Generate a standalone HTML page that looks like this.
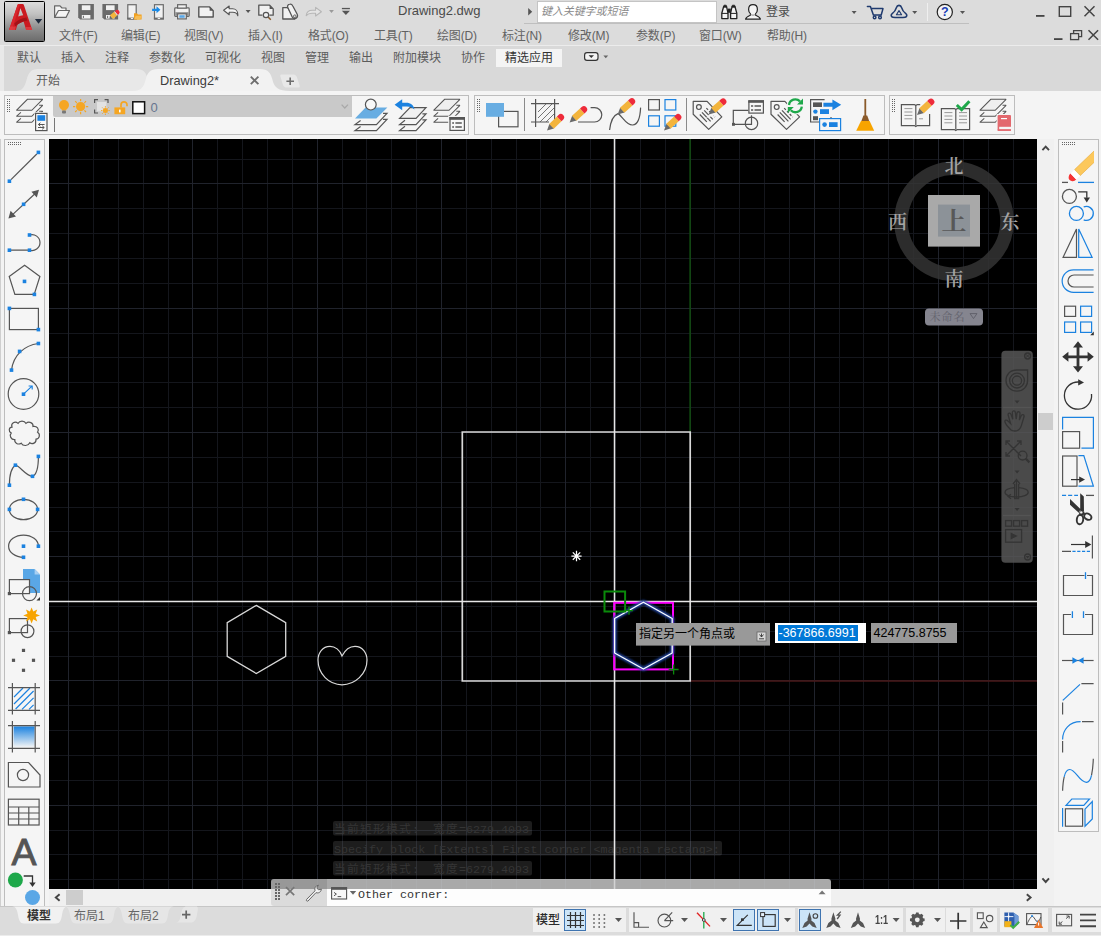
<!DOCTYPE html>
<html lang="zh-CN">
<head>
<meta charset="utf-8">
<title>Drawing2.dwg</title>
<style>
html,body{margin:0;padding:0;}
body{width:1101px;height:936px;overflow:hidden;position:relative;background:#dcdcdc;font-family:"Liberation Sans","Noto Sans CJK SC",sans-serif;font-size:12px;color:#555;}
.abs{position:absolute;}
svg{position:absolute;overflow:visible;}
.t{position:absolute;white-space:nowrap;line-height:16px;}
#titlebar{left:0;top:0;width:1101px;height:24px;background:#dcdcdc;}
#menubar{left:0;top:24px;width:1101px;height:21px;background:#dcdcdc;}
#menubar .t{top:4px;font-size:12px;color:#626262;letter-spacing:-.15px;}
#ribbon{left:0;top:45px;width:1101px;height:46px;background:#d9d9d9;border-top:1px solid #ececec;box-sizing:border-box;}
#ribbon .rt{top:4px;font-size:12px;color:#5c5c5c;}
#toolrow{left:0;top:91px;width:1101px;height:48px;background:#f4f4f4;}
.panel{position:absolute;box-sizing:border-box;border:1px solid #bdbdbd;background:#f5f5f5;}
#canvas{left:49px;top:139px;width:988px;height:750px;background:#000;overflow:hidden;}
#leftbar{left:0;top:139px;width:49px;height:767px;background:#f3f3f3;}
#rightbar{left:1037px;top:139px;width:64px;height:767px;background:#f0f0f0;}
#hscroll{left:49px;top:889px;width:988px;height:17px;background:#f0f0f0;}
#bottom{left:0;top:906px;width:1101px;height:30px;background:#dcdcdc;}
.sg{position:absolute;top:2px;height:24px;background:#f0f0f0;}
.on{position:absolute;top:1px;width:22px;height:22px;box-sizing:border-box;background:#cce4f7;border:1px solid #3f74b0;}
</style>
</head>
<body>
<div id="titlebar" class="abs">
  <div class="abs" style="left:524px;top:23px;width:445px;height:1px;background:#bfbfbf;"></div>
  <div class="t" style="left:398px;top:3px;font-size:13px;color:#4a4a4a;">Drawing2.dwg</div>
  <div class="abs" style="left:537px;top:1px;width:180px;height:22px;box-sizing:border-box;background:#fff;border:1px solid #c4c4c4;"></div>
  <div class="t" style="left:541px;top:3px;font-size:11px;font-style:italic;color:#8a8a8a;letter-spacing:-0.1px;">键入关键字或短语</div>
  <div class="t" style="left:766px;top:4px;font-size:12px;color:#4a4a4a;">登录</div>
  <svg style="left:0;top:0" width="1101" height="24" viewBox="0 0 1101 24">
    <!-- open -->
    <g fill="#f4f4f4" stroke="#666" stroke-width="1.200" stroke-linejoin="round">
      <path d="M54.600 17.400V5.800h5.400l2 2.200h4v2.400"/>
      <path d="M54.600 17.400l3.900-6.900h11l-3.500 6.900z"/>
    </g>
    <!-- save -->
    <g id="floppy">
      <path d="M78.200 4.100h15.700v15.400H80.200l-2-2z" fill="#6a6a6a"/>
      <rect x="81.800" y="5.300" width="8.600" height="4.800" fill="#f1f1f1"/>
      <rect x="81.800" y="15" width="8.600" height="3.600" fill="#f1f1f1"/>
      <rect x="82.900" y="15.800" width="1" height="2.200" fill="#6a6a6a"/>
    </g>
    <!-- save as -->
    <use href="#floppy" x="24.200"/>
    <g transform="translate(109.500 18.800) rotate(-40)">
      <path d="M0 0l2.600-2.400v4.800z" fill="#666"/>
      <rect x="2.600" y="-2.400" width="5.400" height="4.800" fill="#f3b43c"/>
      <rect x="8" y="-2.400" width="1" height="4.800" fill="#fff"/>
      <path d="M9-2.400h1a2.400 2.400 0 0 1 0 4.800H9z" fill="#ee2b3a"/>
    </g>
    <!-- open from mobile -->
    <rect x="127.800" y="4.700" width="8.400" height="14.200" fill="#f1f1f1" stroke="#6a6a6a" stroke-width="1.200"/>
    <rect x="127.200" y="17.600" width="9.600" height="1.900" fill="#6a6a6a"/>
    <rect x="130.800" y="18" width="2.400" height="1" fill="#eee"/>
    <path d="M134 19.500v-6.300h3l1 1.200h3.600v5.100z" fill="#f0a020"/>
    <path d="M134 19.500l1.800-3.800h6.200l-1.800 3.800z" fill="#f7bd55"/>
    <!-- save to mobile -->
    <rect x="154.500" y="4.700" width="8.800" height="14.200" fill="#f1f1f1" stroke="#6a6a6a" stroke-width="1.200"/>
    <rect x="153.900" y="17.600" width="10" height="1.900" fill="#6a6a6a"/>
    <rect x="157.700" y="18" width="2.400" height="1" fill="#eee"/>
    <path d="M152.100 8.700h4.400v-2.400l3.900 3.500-3.900 3.500v-2.400h-4.400z" fill="#1b8ae6"/>
    <!-- print -->
    <rect x="174.700" y="7.900" width="14.500" height="8.400" rx=".8" fill="#f1f1f1" stroke="#666" stroke-width="1.200"/>
    <rect x="175.300" y="12.200" width="13.300" height="3.600" fill="#8c8c8c"/>
    <rect x="177.600" y="4.700" width="8.700" height="3.400" fill="#f1f1f1" stroke="#666" stroke-width="1.200"/>
    <rect x="177.600" y="13.800" width="8.700" height="5.100" fill="#f1f1f1" stroke="#666" stroke-width="1.200"/>
    <rect x="179.300" y="15.200" width="5.400" height="2.600" fill="#5aa7e6"/>
    <!-- page -->
    <path d="M198.800 17V6.900h10.800l3.600 3.800V17z" fill="#f1f1f1" stroke="#555" stroke-width="1.400" stroke-linejoin="round"/>
    <path d="M209.600 6.900v3.800h3.600z" fill="#555"/>
    <!-- undo -->
    <path d="M223.600 10.300l5.600-4.300v2.800h3.400c3 0 5.200 2.200 5.200 5.400v1.600c-.6-2.400-2.400-3.600-5-3.600h-3.600v2.600z" fill="#f4f4f4" stroke="#555" stroke-width="1.100" stroke-linejoin="round"/>
    <path d="M245.600 10h5l-2.500 3z" fill="#555"/>
    <!-- print preview -->
    <path d="M262.400 15.200h-3.600V5.100h10.800l3.600 3.800v6.300h-3.800" fill="#f1f1f1" stroke="#555" stroke-width="1.300" stroke-linejoin="round"/>
    <path d="M269.600 5.100v3.800h3.600z" fill="#555"/>
    <path d="M268 17l2.800 2.800" stroke="#8a5a2a" stroke-width="1.500"/>
    <circle cx="266" cy="15" r="2.700" fill="#f1f1f1" stroke="#555" stroke-width="1.200"/>
    <!-- plot -->
    <path d="M282.800 19V7.600h5l7 11.400z" fill="#f1f1f1" stroke="#555" stroke-width="1.300" stroke-linejoin="round"/>
    <path d="M287.800 7.600c-.8-1.800.2-3.200 2-3.400 1.400-.2 2.400.6 3 1.800l4.400 8.200c1 2-.2 4.400-2.400 4.400-1.400 0-2.200-.8-2.800-2z" fill="#f1f1f1" stroke="#555" stroke-width="1.300" stroke-linejoin="round"/>
    <circle cx="294.800" cy="16.200" r="1.300" fill="none" stroke="#555" stroke-width=".9"/>
    <!-- redo (disabled) -->
    <path d="M321.400 11.800l-5.800-4.400v2.800h-3.400c-3 0-5.600 1.800-6 5.400 1.400-1.800 3.400-2.400 5.800-2.400h3.600v2.800z" fill="#e4e4e4" stroke="#b6b6b6" stroke-width="1.100" stroke-linejoin="round"/>
    <path d="M329.100 10h4.800l-2.400 2.900z" fill="#9a9a9a"/>
    <!-- customize -->
    <rect x="341.900" y="7.900" width="8" height="1.300" fill="#555"/>
    <path d="M341.900 10.800h8l-4 4.300z" fill="#555"/>
    <!-- search arrow -->
    <path d="M528.200 8l4 3.800-4 3.800z" fill="#555"/>
    <!-- binoculars -->
    <g fill="#f4f4f4" stroke="#222" stroke-width="1.300" stroke-linejoin="round">
      <path d="M721.800 18.600v-5.400l1.800-6.400h3l1.400 6.400v5.400z"/>
      <path d="M730.600 18.600v-5.400l1.400-6.400h3l1.800 6.400v5.400z"/>
    </g>
    <path d="M721.800 13.400h6.200M730.600 13.400h6.200" stroke="#222" stroke-width="1"/>
    <rect x="727.800" y="8.600" width="3" height="4.200" fill="#222"/>
    <path d="M723.400 7l.6-1.800h2.200l.6 1.800zM731.800 7l.6-1.800h2.200l.6 1.800z" fill="#222" stroke="#222" stroke-width=".8"/>
    <!-- user -->
    <path d="M745.600 19.200c.4-2.400 2.400-3 4.800-4v-1.600c-1.200-1-1.800-2.400-1.800-4.200 0-2.800 1.600-4.800 4.400-4.800s4.400 2 4.400 4.800c0 1.800-.6 3.200-1.800 4.200v1.600c2.400 1 4.400 1.600 4.800 4z" fill="#f4f4f4" stroke="#222" stroke-width="1.200" stroke-linejoin="round"/>
    <path d="M750.600 14.400c1.600 1 3.200 1 4.800 0" fill="none" stroke="#888" stroke-width="1"/>
    <path d="M851.600 11h5l-2.500 3z" fill="#555"/>
    <!-- cart -->
    <g fill="none" stroke="#1f3a6e" stroke-width="1.500" stroke-linejoin="round" stroke-linecap="round">
      <path d="M867.400 6.400h3l3 8.600h7.800l1.800-6.400h-11"/>
      <circle cx="874.600" cy="17.400" r="1.300"/>
      <circle cx="880" cy="17.400" r="1.300"/>
    </g>
    <!-- a360 -->
    <g fill="none" stroke="#1f3a6e" stroke-width="1.600" stroke-linejoin="round">
      <path d="M899 5.400c1.400 0 2.200.8 2.600 2.200.8 2.800 2.200 4.600 4.200 6 1.400 1 1.400 3.200-.6 3.600-2.200.4-10.200.4-12.400 0-2-.4-2-2.600-.6-3.600 2-1.400 3.400-3.200 4.200-6 .4-1.400 1.200-2.200 2.600-2.200z"/>
      <path d="M899 10.600l2.600 4.200h-5.200z" stroke-width="1.100"/>
    </g>
    <path d="M912.200 11h5l-2.500 3z" fill="#555"/>
    <rect x="927" y="3" width="1" height="18" fill="#efefef"/>
    <!-- help -->
    <circle cx="944.800" cy="12" r="7.600" fill="#f4f4f4" stroke="#222" stroke-width="1.200"/>
    <text x="944.800" y="16.400" text-anchor="middle" font-family="Liberation Sans, sans-serif" font-weight="bold" font-size="12.500" fill="#1a3fb5">?</text>
    <path d="M960 11h5l-2.500 3z" fill="#555"/>
    <!-- window controls -->
    <rect x="1036" y="15" width="8.500" height="1.800" fill="#444"/>
    <rect x="1059.300" y="6.700" width="11.400" height="9.600" fill="none" stroke="#444" stroke-width="1.400"/>
    <path d="M1084.500 6.200l10 10m0-10l-10 10" stroke="#444" stroke-width="1.500"/>
  </svg>
</div>
<div class="abs" id="appbtn" style="left:4px;top:1px;width:41px;height:41px;box-sizing:border-box;border:1px solid #000;border-radius:1.500px;background:linear-gradient(#dcdcdc,#c2c2c2 30%,#8a8a8a 70%,#6c6c6c);z-index:5;">
  <svg style="left:0;top:0" width="39" height="39" viewBox="5 2 39 39">
    <path d="M9 30L17.600 4.800Q17.900 4.100 18.800 4.100H22.600Q23.500 4.100 23.800 4.800L32.200 30H26.200L23.600 21.400Q20.500 22.400 17.500 24.600L15.800 30ZM20.400 8.200L18.200 16.600Q20.600 15.600 23.200 15.200Z" fill="#cb1a21" fill-rule="evenodd"/>
    <path d="M9 30L17.600 4.800Q17.900 4.100 18.800 4.100H20L12 30Z" fill="#d9262d"/>
    <path d="M14.200 23.800Q19 18.600 26.400 17.600L27.400 20.600Q20.500 21.600 15.600 26.200Z" fill="#a31218"/>
    <path d="M9 30l1.200-3.400h5.600L15 30zM26.200 30l-.9-3h5.900l1 3z" fill="#e2464b" opacity=".7"/>
    <path d="M34.900 19.100h7.300l-3.650 4.600z" fill="#1e2a3c"/>
  </svg>
</div>

<div id="menubar" class="abs">
  <div class="t" style="left:59px;">文件(F)</div>
  <div class="t" style="left:121px;">编辑(E)</div>
  <div class="t" style="left:184px;">视图(V)</div>
  <div class="t" style="left:248px;">插入(I)</div>
  <div class="t" style="left:308px;">格式(O)</div>
  <div class="t" style="left:374px;">工具(T)</div>
  <div class="t" style="left:437px;">绘图(D)</div>
  <div class="t" style="left:502px;">标注(N)</div>
  <div class="t" style="left:568px;">修改(M)</div>
  <div class="t" style="left:636px;">参数(P)</div>
  <div class="t" style="left:699px;">窗口(W)</div>
  <div class="t" style="left:767px;">帮助(H)</div>
  <svg style="left:0;top:0" width="1101" height="21" viewBox="0 24 1101 21">
    <rect x="1054" y="38.200" width="8.500" height="1.800" fill="#444"/>
    <rect x="1070.600" y="33.600" width="8" height="6" fill="none" stroke="#444" stroke-width="1.300"/>
    <path d="M1073.600 33.600v-3h8v6h-3" fill="none" stroke="#444" stroke-width="1.300"/>
    <path d="M1088.500 30.200l9.600 9.600m0-9.600l-9.600 9.600" stroke="#444" stroke-width="1.500"/>
  </svg>
</div>

<div id="ribbon" class="abs">
  <div class="abs" style="left:0;top:0;width:4px;height:47px;background:#e9e9e9;"></div>
  <div class="abs" style="left:496px;top:3px;width:66px;height:18px;background:#f4f4f4;"></div>
  <div class="t rt" style="left:17px;">默认</div>
  <div class="t rt" style="left:61px;">插入</div>
  <div class="t rt" style="left:105px;">注释</div>
  <div class="t rt" style="left:149px;">参数化</div>
  <div class="t rt" style="left:205px;">可视化</div>
  <div class="t rt" style="left:261px;">视图</div>
  <div class="t rt" style="left:305px;">管理</div>
  <div class="t rt" style="left:349px;">输出</div>
  <div class="t rt" style="left:393px;">附加模块</div>
  <div class="t rt" style="left:461px;">协作</div>
  <div class="t rt" style="left:505px;color:#333;">精选应用</div>
  <svg style="left:0;top:-1px" width="1101" height="46" viewBox="0 45 1101 46">
    <rect x="584.600" y="52.600" width="13.400" height="7.800" rx="2.400" fill="#f4f4f4" stroke="#333" stroke-width="1.200"/>
    <path d="M588.600 55.200h5.400l-2.700 2.800z" fill="#333"/>
    <path d="M603.400 55.400h4.800l-2.400 2.800z" fill="#666"/>
    <!-- doc tabs -->
    <path d="M16 91c6 0 8.500-3.500 10.500-11S31 69 38 69h98c8 0 10 3.500 12 11S152 91 160 91z" fill="#e8e8e8"/>
    <path d="M281.400 74.400h11.600c2.600 0 3.600 1.400 4.400 4l2.200 7c.5 1.600 0 2.200-1.600 2.200h-10.600c-3 0-4.200-1.400-5-4.400l-2-6.600c-.4-1.400 0-2.200 1-2.200z" fill="#e8e8e8"/>
    <path d="M133 91c8 0 10.500-3.500 12.500-11S150 69 158 69h102c8 0 10.500 3.500 12.500 11S278 91 290 91z" fill="#f2f2f2"/>
    <path d="M286.400 81.200h7.600m-3.800-3.800v7.600" stroke="#6e6e6e" stroke-width="1.600"/>
    <path d="M250.800 76.600l7.600 7.600m0-7.600l-7.600 7.600" stroke="#6e6e6e" stroke-width="1.900"/>
  </svg>
  <div class="t" style="left:36px;top:27px;font-size:12px;color:#5c5c5c;">开始</div>
  <div class="t" style="left:160px;top:27px;font-size:12.800px;color:#3c3c3c;">Drawing2*</div>
</div>

<div id="toolrow" class="abs">
  <div class="panel" style="left:4px;top:4px;width:465px;height:40px;"></div>
  <div class="panel" style="left:474px;top:4px;width:411px;height:40px;"></div>
  <div class="panel" style="left:889px;top:4px;width:126px;height:40px;"></div>
  <div class="abs" style="left:53px;top:5px;width:299px;height:21px;background:#c9c9c9;border-radius:0 0 0 2px;"></div>
  <div class="t" style="left:150.500px;top:8.500px;font-size:13px;color:#66758f;">0</div>
  <svg style="left:0;top:0" width="1101" height="48" viewBox="0 91 1101 48">
    <defs>
      <g id="pencil"><path d="M0 0L6.600-3.300v6.600z" fill="#6a6a6a"/><path d="M6.200-3.100L6.600-3.300h10.400v6.600H6.600L6.200 3.100z" fill="#f3b43c"/><path d="M17-3.300h2.200a3.300 3.300 0 0 1 0 6.600H17z" fill="#ee2b3a"/></g>
      <g id="grip"><path d="M0 0h1v1H0zM2 0h1v1H2zM0 2h1v1H0zM2 2h1v1H2zM0 4h1v1H0zM2 4h1v1H2zM0 6h1v1H0zM2 6h1v1H2zM0 8h1v1H0zM2 8h1v1H2zM0 10h1v1H0zM2 10h1v1H2zM0 12h1v1H0zM2 12h1v1H2z" fill="#666"/></g>
      <g id="lay3" fill="none" stroke="#555" stroke-width="1.050" stroke-linejoin="miter" stroke-miterlimit="2">
        <path d="M11-.1h15.300L15.400 10.900H0z" fill="#efefef"/>
        <path d="M4.500 13L0 16.900h15.400L26.300 5.900h-3.600"/>
        <path d="M4.500 19L0 22.900h15.400L26.300 11.900h-3.600"/>
      </g>
    </defs>
    <use href="#grip" x="7" y="99"/>
    <use href="#grip" x="477" y="99"/>
    <use href="#grip" x="892" y="99"/>
    <!-- layer properties -->
    <use href="#lay3" x="16.400" y="99.400"/>
    <rect x="34.400" y="112.200" width="13.800" height="19.600" fill="#f8f8f8"/><rect x="35.600" y="113.400" width="11.400" height="17.200" fill="#f8f8f8" stroke="#555" stroke-width="1.200"/>
    <rect x="37.400" y="115.200" width="7.800" height="5.600" fill="#1b82e0"/>
    <path d="M44.600 124.500h-6.200m2-1.800l-2 1.800 2 1.800M38 127.500h6.200m-2-1.800l2 1.800-2 1.800" fill="none" stroke="#555" stroke-width="1"/>
    <rect x="54" y="118" width="1" height="14" fill="#777"/>
    <!-- bulb -->
    <circle cx="64" cy="105" r="5" fill="#f5a623"/>
    <path d="M61 108h6l-1 2.500h-4z" fill="#f5a623"/>
    <rect x="62" y="110.600" width="4" height="3" rx="1" fill="#777"/>
    <!-- sun -->
    <circle cx="80.600" cy="106.600" r="4.600" fill="#f5a623"/>
    <path d="M80.600 99v2.200m0 10.800v2.200M73 106.600h2.200m10.800 0h2.200M75.200 101.200l1.600 1.600m7.600 7.600l1.600 1.600M86 101.200l-1.600 1.600m-7.600 7.600l-1.600 1.600" stroke="#f5a623" stroke-width="1.200"/>
    <!-- vp freeze -->
    <rect x="97" y="102" width="9.400" height="9.400" fill="#e2e2e2"/>
    <path d="M94.600 103v-3.400h3.400M104.600 99.600h3.400v3.400M94.600 109.600v3.400h3.400" fill="none" stroke="#555" stroke-width="1.200"/>
    <circle cx="105.400" cy="110.600" r="2.500" fill="#f5a623"/>
    <path d="M105.400 106.200v1.400m0 6v1.400M101 110.600h1.400m6 0h1.400M102.300 107.500l1 1m4.200 4.200l1 1M108.500 107.500l-1 1m-4.200 4.200l-1 1" stroke="#f5a623" stroke-width="1"/>
    <!-- lock -->
    <rect x="114.400" y="107.400" width="10.800" height="6.800" fill="#f5a623"/>
    <path d="M121 107.400v-2.600a3 3 0 0 1 6 0v1.400" fill="none" stroke="#f5a623" stroke-width="1.700"/>
    <rect x="119" y="109.600" width="1.600" height="2.800" fill="#fff"/>
    <!-- colour swatch -->
    <rect x="132.800" y="101.800" width="11.800" height="11.800" fill="#fff" stroke="#111" stroke-width="1.500"/>
    <path d="M341.600 104.600l3.200 3.400 3.200-3.400" fill="none" stroke="#a8a8a8" stroke-width="1.200"/>
    <!-- make layer current -->
    <g fill="none" stroke="#555" stroke-width="1.200">
      <path d="M360.600 120.400L355 124.600h21.400L387 113.400h-4"/>
      <path d="M360.600 126.400L355 130.600h21.400L387 119.400h-4"/>
    </g>
    <path d="M365.600 107.400h21.800l-11 11.200H355z" fill="#68ade2"/>
    <circle cx="370.800" cy="104.600" r="5.400" fill="#f8f8f8" stroke="#555" stroke-width="1.200"/>
    <!-- layer previous -->
    <g fill="#f1f1f1" stroke="#555" stroke-width="1.200">
      <path d="M410 107.600h16l-10 10.800h-16.400z"/>
      <path d="M405 120.200l-5.400 4.400H416l10-10.800h-3.600" fill="none"/>
      <path d="M405 126.200l-5.400 4.400H416l10-10.800h-3.600" fill="none"/>
    </g>
    <path d="M394.600 104.800l7.600-5.600v3.600h4c4.400 0 7.800 2.400 8.200 6.800-1.800-2.400-4.200-3.200-7.600-3.200h-4.600v3.800z" fill="#1b82e0"/>
    <!-- layer states -->
    <use href="#lay3" x="433.600" y="99.400"/>
    <rect x="448.200" y="115.800" width="18" height="16.400" fill="#f5f5f5"/>
    <rect x="450" y="117.600" width="14.400" height="12.800" fill="#f8f8f8" stroke="#555" stroke-width="1.200"/>
    <rect x="449.400" y="117" width="15.600" height="2.800" fill="#555"/>
    <path d="M452.200 123h1.800M455.400 123h6.400M452.200 127h1.800M455.400 127h6.400" stroke="#555" stroke-width="1.400"/>
    <!-- draworder -->
    <rect x="498.600" y="111.400" width="19.400" height="15.400" fill="none" stroke="#555" stroke-width="1.200"/>
    <rect x="486" y="103" width="18" height="13.800" fill="#68ade2"/>
    <rect x="524" y="98" width="1" height="33" fill="#8a8a8a"/>
    <!-- hatch edit -->
    <path d="M538 112l8-8M538 118l14-14M540 122l14-14M546 122l8-8" stroke="#666" stroke-width=".900"/>
    <path d="M535.600 99v28M554.600 99v23M531 103.600h28M531 122h18" stroke="#555" stroke-width="1.200"/>
    <use href="#pencil" transform="translate(547 130.600) rotate(-44)"/>
    <!-- pedit -->
    <path d="M578 122h16.600a7.200 7.200 0 0 0 0-14.400h-4" fill="none" stroke="#555" stroke-width="1.200"/>
    <use href="#pencil" transform="translate(569.600 122.400) rotate(-42)"/>
    <!-- splinedit -->
    <path d="M609.600 130c1-9 3-14.400 8.400-16.400 4 2 8 11.600 14.600 11.400 5.400-.4 7.600-8 8-17.400" fill="none" stroke="#555" stroke-width="1.200"/>
    <use href="#pencil" transform="translate(617.600 114.400) rotate(-42)"/>
    <!-- arrayedit -->
    <rect x="648.600" y="99.600" width="10.800" height="10.400" fill="none" stroke="#555" stroke-width="1.200"/>
    <rect x="665" y="99.600" width="10.800" height="10.400" fill="none" stroke="#1b82e0" stroke-width="1.200"/>
    <rect x="648.600" y="115.800" width="10.800" height="10.400" fill="none" stroke="#1b82e0" stroke-width="1.200"/>
    <rect x="665" y="115.800" width="10.800" height="10.400" fill="none" stroke="#1b82e0" stroke-width="1.200"/>
    <use href="#pencil" transform="translate(664 130.400) rotate(-43)"/>
    <rect x="686" y="98" width="1" height="33" fill="#8a8a8a"/>
    <!-- attedit -->
<g fill="none" stroke="#555" stroke-width="1.200" stroke-linejoin="round" transform="translate(0 0)">
  <path d="M693.200 101.400h13.900l14.700 15.500-13.100 12.500-15.500-15.200z"/>
  <circle cx="698.900" cy="107.100" r="2.400"/>
  <path d="M704.2 110.3l8.6 9.0M702.0 112.4l8.6 9.0M699.8 114.5l7.0 7.4"/>
  <path d="M706.4 108.2l8.6 9.0" stroke-dasharray="2.400 1.600"/>
</g>
<path d="M706 118l6-7 4 4z" fill="#f5f5f5"/>
    <use href="#pencil" transform="translate(708.700 114.400) rotate(-41.500)"/>
    <!-- battman -->
    <path d="M748.300 110.300h-15v14h18.200v-9" fill="none" stroke="#555" stroke-width="1.200"/>
    <circle cx="751.500" cy="123.400" r="6.200" fill="none" stroke="#555" stroke-width="1.200"/>
    <rect x="732" y="122.900" width="2.900" height="2.900" fill="#555"/>
    <rect x="748.900" y="100.900" width="14.500" height="12.200" fill="#f5f5f5" stroke="#555" stroke-width="1.200"/>
    <rect x="748.300" y="100.300" width="15.700" height="2.500" fill="#555"/>
    <path d="M751 106h2.200m1.300 0h6.500M751 110.100h2.200m1.300 0h6.500" stroke="#555" stroke-width="1.500"/>
    <!-- attsync -->
<g fill="none" stroke="#555" stroke-width="1.200" stroke-linejoin="round" transform="translate(77.8 0)">
  <path d="M693.200 101.400h13.900l14.700 15.500-13.100 12.500-15.500-15.200z"/>
  <circle cx="698.900" cy="107.100" r="2.400"/>
  <path d="M704.2 110.3l8.6 9.0M702.0 112.4l8.6 9.0M699.8 114.5l7.0 7.4"/>
  <path d="M706.4 108.2l8.6 9.0" stroke-dasharray="2.400 1.600"/>
</g>
<circle cx="795.400" cy="105.800" r="8.800" fill="#f5f5f5"/>
    <g fill="none" stroke="#1ea84a" stroke-width="2.300">
      <path d="M789 105a6.400 6.400 0 0 1 11-3.600"/>
      <path d="M801.800 106.600a6.400 6.400 0 0 1-11 3.600"/>
    </g>
    <path d="M803 98.600v6h-6zM787.800 113v-6h6z" fill="#1ea84a"/>
    <!-- dataextraction -->
    <path d="M831 117v5h-20.400V99.600h14" fill="none" stroke="#555" stroke-width="1.200"/>
    <rect x="813" y="102.400" width="9" height="4.600" fill="#555"/>
    <circle cx="815.400" cy="111.600" r="2.200" fill="#1b82e0"/>
    <rect x="820" y="109.200" width="9" height="4.800" fill="#1b82e0"/>
    <rect x="813" y="116.200" width="5" height="4" fill="#555"/>
    <path d="M823.400 102.800h9v-3.400l8.800 5.400-8.800 5.400v-3.400h-9z" fill="#1b82e0"/>
    <rect x="819.600" y="118.600" width="21" height="12" fill="#f5f5f5" stroke="#1b82e0" stroke-width="1.200"/>
    <circle cx="824.600" cy="124.600" r="2.300" fill="#1b82e0"/>
    <rect x="829" y="122.200" width="8.600" height="4.800" fill="#1b82e0"/>
    <!-- broom -->
    <rect x="864.400" y="99" width="1.800" height="18" fill="#8a5a2a"/>
    <path d="M863.400 115.600h3.800l2 5.400h-7.800z" fill="#8a5a2a"/>
    <path d="M861 121h8.600l4.600 9.800h-18z" fill="#f7a400"/>
    <!-- refedit book -->
    <g fill="none" stroke="#555" stroke-width="1.200">
      <path d="M929.600 114v11.600h-12.400l-1.400 1-1.400-1h-13V104.600h13l1.400 1 1.400-1h3"/>
      <path d="M915.800 105.600v20"/>
    </g>
    <path d="M904.400 108.600h8M904.400 112h8M904.400 115.400h8M904.400 118.800h8M919 118.800h4" stroke="#999" stroke-width="1"/>
    <use href="#pencil" transform="translate(917 115) rotate(-43)"/>
    <!-- refclose book -->
    <g fill="none" stroke="#555" stroke-width="1.200">
      <path d="M941.400 108.600h13l1.400 1 1.400-1h12.400v21h-12.400l-1.400 1-1.400-1h-13z"/>
      <path d="M955.800 109.600v20"/>
    </g>
    <path d="M944.400 112.600h8M944.400 116h8M944.400 119.400h8M944.400 122.800h8M959 112.600h8M959 116h8M959 119.400h8M959 122.800h8" stroke="#999" stroke-width="1"/>
    <path d="M956.800 105l4.800 4.600 7.800-8.400" fill="none" stroke="#1ea84a" stroke-width="3"/>
    <!-- layer + book -->
    <use href="#lay3" x="979.800" y="99.400"/>
    <rect x="996.600" y="114" width="15.400" height="17.800" fill="#f5f5f5"/>
    <rect x="997.600" y="115" width="13.400" height="15.800" rx="1" fill="#e3686e"/>
    <rect x="1001" y="118" width="6" height="1.200" fill="#fff"/>
    <rect x="999.200" y="126.800" width="11.800" height="2.600" fill="#f5f5f5"/>
    <rect x="997.600" y="129.400" width="13.400" height="1.400" fill="#e3686e"/>
  </svg>
</div>

<div id="leftbar" class="abs">
  <div class="abs" style="left:0;top:0;width:1px;height:767px;background:#cfcfcf;"></div>
  <div class="panel" style="left:4px;top:0;width:41px;height:768px;"></div>
  <svg style="left:0;top:0" width="49" height="767" viewBox="0 139 49 767">
    <defs>
      <rect id="bs" x="-1.800" y="-1.800" width="3.600" height="3.600" fill="#1b82e0"/>
      <rect id="ds" x="-1.600" y="-1.600" width="3.200" height="3.200" fill="#555"/>
    </defs>
    <path d="M8 142h1v1H8zM10 142h1v1h-1zM12 142h1v1h-1zM14 142h1v1h-1zM16 142h1v1h-1zM18 142h1v1h-1zM20 142h1v1h-1zM8 144h1v1H8zM10 144h1v1h-1zM12 144h1v1h-1zM14 144h1v1h-1zM16 144h1v1h-1zM18 144h1v1h-1zM20 144h1v1h-1z" fill="#666"/>
    <g fill="none" stroke="#555" stroke-width="1.200">
      <!-- line -->
      <path d="M11 179.600L36.800 154"/>
      <!-- xline -->
      <path d="M11.500 215.600L36 192.800"/>
      <!-- pline -->
      <path d="M9.400 250.200h20.100a8 8 0 1 0 0-15.200"/>
      <!-- polygon -->
      <path d="M24.600 265.200l15.300 11.300-5.700 17.900H14.900L9.200 276.500z"/>
      <!-- rect -->
      <rect x="9.400" y="308.400" width="29" height="21.200"/>
      <!-- arc -->
      <path d="M38.400 343.500C24 345.500 13.500 355 11.500 370.100"/>
      <!-- circle -->
      <circle cx="23.500" cy="394" r="15.300"/>
      <!-- cloud -->
      <path transform="translate(0 2.200)" d="M12 425c-1.500-4 3-6.500 6-3.800 1.500-3 6.500-3 8 0 3-2.600 7.500-.6 7 3 4-.8 6.600 3 4.600 5.800 3 2 2 6.600-1.600 7 .4 3.600-3.600 5.600-6.200 3.600-1.600 3.400-6.800 3.600-8.600.4-3 2-7-.2-6.400-3.600-3.800.2-5.800-4-3.600-6.600-3-1.600-2.400-5.600.8-5.800z"/>
      <!-- spline -->
      <path d="M9.400 485.200c0-9 2-17.500 6-20 5 1 10 10.500 17.100 11.100 4.500-2 5.900-11 5.900-19.900"/>
      <!-- ellipse -->
      <ellipse cx="23.500" cy="509.500" rx="14.100" ry="10.200"/>
      <!-- ellipse arc -->
      <path d="M38.400 546.200a14.900 11.100 0 1 0-14.900 11.100"/>
      <!-- region -->
      <path d="M8.400 762.500h20.200L40 775v12H8.400z"/>
      <circle cx="23" cy="775" r="5.600"/>
      <!-- table -->
      <rect x="8.400" y="799.200" width="30.700" height="25.800"/>
      <path d="M8.400 807h30.700M8.400 813h30.700M8.400 819h30.700M18.700 807v18M28.800 807v18"/>
    </g>
    <use href="#bs" x="38.400" y="152.400"/><use href="#bs" x="9.400" y="181.200"/>
    <path d="M8.400 218.600l2.200-7.800 5.400 5.800zM39 189.800l-2.200 7.800-5.400-5.800z" fill="#555"/>
    <use href="#bs" x="23.600" y="204.300"/>
    <use href="#bs" x="9.400" y="250.200"/><use href="#bs" x="29.500" y="250.200"/><use href="#bs" x="29.500" y="235"/>
    <use href="#bs" x="24.500" y="281.400"/><use href="#bs" x="34.400" y="294.400"/>
    <use href="#bs" x="9.400" y="308.400"/><use href="#bs" x="38.400" y="329.600"/>
    <use href="#bs" x="38.400" y="343.500"/><use href="#bs" x="19.600" y="351.400"/><use href="#bs" x="11.500" y="370.100"/>
    <use href="#bs" x="23.500" y="394.200"/>
    <path d="M24 393.600l8-7.400M28.600 386h3.600v3.600" fill="none" stroke="#1b82e0" stroke-width="1.150"/>
    <use href="#bs" x="38.400" y="456.400"/><use href="#bs" x="15.400" y="465.200"/><use href="#bs" x="32.500" y="476.300"/><use href="#bs" x="9.400" y="485.200"/>
    <use href="#bs" x="9.400" y="509.400"/><use href="#bs" x="23.500" y="499.300"/><use href="#bs" x="37.600" y="509.400"/>
    <use href="#bs" x="23.500" y="546.200"/><use href="#bs" x="38.400" y="546.200"/><use href="#bs" x="23.500" y="557.300"/>
    <!-- insert block -->
    <path d="M23 569h11.600l5.400 5.400V593H23z" fill="#5aa7e6"/>
    <path d="M34.600 569v5.400H40z" fill="#a9d0f2"/>
    <rect x="9.400" y="579.600" width="20.100" height="14" fill="#f5f5f5" stroke="#555" stroke-width="1.200"/>
    <circle cx="29.500" cy="593.600" r="7" fill="none" stroke="#555" stroke-width="1.200"/>
    <use href="#ds" x="9.400" y="593.600"/>
    <path d="M40 597v3.600h-3.600z" fill="#333"/>
    <!-- make block -->
    <rect x="9.400" y="618.600" width="18.100" height="14" fill="none" stroke="#555" stroke-width="1.200"/>
    <circle cx="27.500" cy="631.200" r="6.400" fill="none" stroke="#555" stroke-width="1.200"/>
    <use href="#ds" x="9.400" y="632.600"/>
    <path d="M31.600 607.400l1.700 4.200 3.900-2.200-1.500 4.300 4.300 1.700-4.300 1.700 1.500 4.300-3.900-2.200-1.700 4.200-1.700-4.200-3.900 2.200 1.500-4.300-4.300-1.700 4.300-1.700-1.500-4.300 3.900 2.200z" fill="#f7a400"/>
    <!-- point -->
    <use href="#ds" x="23.500" y="650.400"/><use href="#ds" x="13.500" y="660.300"/><use href="#ds" x="33.500" y="660.300"/><use href="#ds" x="23.500" y="670.300"/>
    <!-- hatch -->
    <path d="M14 697l9-9M14 704l16-16M15.600 709l18-18M22 709.400l11.600-11.600M29 709.400l4.600-4.600" stroke="#1b82e0" stroke-width="1.200"/>
    <path d="M12.400 683v31.600M35.200 683v31.600M8 687.600h32M8 710.400h32" stroke="#555" stroke-width="1.200"/>
    <!-- gradient -->
    <linearGradient id="gr" x1="0" y1="0" x2="0" y2="1"><stop offset="0" stop-color="#1b82e0"/><stop offset="1" stop-color="#f5f5f5"/></linearGradient>
    <rect x="13.600" y="726.400" width="21" height="21" fill="url(#gr)"/>
    <path d="M12.400 721v31.600M35.200 721v31.600M8 725.600h32M8 748.400h32" stroke="#555" stroke-width="1.200"/>
    <!-- mtext -->
    <text x="24" y="864.600" text-anchor="middle" font-family="Liberation Sans, sans-serif" font-size="37.500" fill="#555" stroke="#555" stroke-width=".900">A</text>
    <!-- add selected -->
    <circle cx="15.400" cy="880" r="7.500" fill="#1ea84a"/>
    <circle cx="32.500" cy="897.500" r="7.500" fill="#5aa7e6"/>
    <path d="M23.700 876h8.800v7" fill="none" stroke="#333" stroke-width="1.300"/>
    <path d="M29.300 882.400h6.400l-3.200 4.600z" fill="#333"/>
  </svg>
</div>

<div id="canvas" class="abs">
<svg style="left:0;top:0" width="988" height="750" viewBox="49 139 988 750">
<path d="M93.5 139V889M118.5 139V889M143.5 139V889M168.5 139V889M217.5 139V889M242.5 139V889M267.5 139V889M292.5 139V889M342.5 139V889M366.5 139V889M391.5 139V889M416.5 139V889M466.5 139V889M491.5 139V889M516.5 139V889M540.5 139V889M590.5 139V889M615.5 139V889M640.5 139V889M665.5 139V889M714.5 139V889M739.5 139V889M764.5 139V889M789.5 139V889M839.5 139V889M863.5 139V889M888.5 139V889M913.5 139V889M963.5 139V889M988.5 139V889M1013.5 139V889M49 159.5H1037M49 208.5H1037M49 233.5H1037M49 258.5H1037M49 283.5H1037M49 333.5H1037M49 357.5H1037M49 382.5H1037M49 407.5H1037M49 457.5H1037M49 482.5H1037M49 507.5H1037M49 531.5H1037M49 581.5H1037M49 606.5H1037M49 631.5H1037M49 656.5H1037M49 705.5H1037M49 730.5H1037M49 755.5H1037M49 780.5H1037M49 830.5H1037M49 854.5H1037M49 879.5H1037" stroke="#14161c" stroke-width="1" fill="none"/>
<path d="M68.5 139V889M192.5 139V889M317.5 139V889M441.5 139V889M565.5 139V889M690.5 139V889M814.5 139V889M938.5 139V889M49 183.5H1037M49 308.5H1037M49 432.5H1037M49 556.5H1037M49 680.5H1037M49 805.5H1037" stroke="#20232c" stroke-width="1" fill="none"/>
<!-- axes -->
<path d="M690.100 139V432" stroke="#104c10" stroke-width="1.500"/>
<path d="M690 681H1037" stroke="#4a1818" stroke-width="1.600"/>
<!-- viewcube -->
<circle cx="954" cy="221.200" r="53" fill="none" stroke="#353535" stroke-opacity=".83" stroke-width="13.600"/>
<rect x="928" y="195" width="52" height="51.600" fill="#a9a9a9"/>
<rect x="938" y="204.600" width="32" height="32" fill="#8c9298"/>
<text x="954" y="229.500" text-anchor="middle" font-family="Noto Serif CJK SC, Liberation Serif, serif" font-size="25" font-weight="700" fill="#585858">上</text>
<g font-family="Noto Serif CJK SC, Liberation Serif, serif" font-size="19" font-weight="600" fill="#a4a4a4" text-anchor="middle">
<text x="954" y="173">北</text>
<text x="954" y="286">南</text>
<text x="897.500" y="229">西</text>
<text x="1010" y="229">东</text>
</g>
<rect x="925" y="308.600" width="58" height="17" rx="4" fill="#85858f"/>
<text x="929.500" y="321" font-family="Noto Serif CJK SC, Liberation Serif, serif" font-size="11" letter-spacing="1" fill="#62626c">未命名</text>
<path d="M970 313.600h7l-3.500 5z" fill="none" stroke="#62626c" stroke-width="1"/>
<!-- nav bar -->
<rect x="1001.400" y="350.800" width="31.400" height="212" rx="4" fill="#585858" fill-opacity=".84"/>
<g fill="none" stroke="#343434" stroke-width="1.300">
  <circle cx="1027.600" cy="356" r="3"/>
  <path d="M1025.800 354.200l3.600 3.600m0-3.600l-3.600 3.600" stroke-width="1"/>
  <circle cx="1027.600" cy="557" r="3"/>
  <path d="M1006 380.600c0-6 4-10.600 11-10.600h10.600v10.600c0 6-4.600 10.600-10.600 10.600s-11-4.600-11-10.600z"/>
  <circle cx="1017" cy="380.600" r="7.400"/>
  <circle cx="1017" cy="380.600" r="4.600"/>
  <path d="M1003 407.500h28" stroke="#545454"/>
  <path d="M1011 430c-2.500-2.500-5.500-6-6-8s1.500-2.400 3-1l2.600 2.600-2.400-8.400c-.6-2.200 2-3 2.800-.8l1.800 5-.4-6.600c-.2-2.400 2.800-2.600 3-.2l.8 6.600.8-6c.4-2.200 3.200-1.800 3 .4l-.6 6.400 1.800-4.200c.8-2 3.400-1.200 2.800 1l-2.600 8.600c-1 3.400-2.600 5.600-6.400 5.600-1.800 0-3-.2-4-1z"/>
  <path d="M1006 441l15 15m0-15l-15 15M1006 445v-4h4M1017 441h4v4M1006 452v4h4"/>
  <circle cx="1022.600" cy="455.600" r="4.400"/>
  <path d="M1025.800 458.800l3.600 3.600" stroke-width="2.200"/>
  <path d="M1016.500 481v18M1013 484l3.500-4.500 3.500 4.500M1014.600 484v14.600h4V484"/>
  <path d="M1014.600 487.600c-6 .6-9.600 2.400-9.600 4.600 0 2.800 5 4.800 11.600 4.800s11.600-2 11.600-4.800c0-2.200-3.600-4-9.600-4.600M1011 494.400l-3 2 3 2.400"/>
  <path d="M1003 515.500h28" stroke="#545454"/>
  <rect x="1005.600" y="520.600" width="6" height="5.600"/><rect x="1013.600" y="520.600" width="6" height="5.600"/><rect x="1021.600" y="520.600" width="6" height="5.600"/>
  <rect x="1005.600" y="529.600" width="16" height="12.600"/>
</g>
<path d="M1014.600 400.600h5l-2.500 3zM1014.600 470.600h5l-2.500 3zM1014.600 508h5l-2.500 3zM1010.600 532.400v7l7-3.500z" fill="#343434"/>
<path d="M1025.600 556h4l-2 2.600z" fill="#343434"/>
<!-- history -->
<rect x="333" y="821" width="199" height="14.500" rx="2" fill="#fff" fill-opacity=".113"/>
<rect x="333" y="841" width="389" height="14.500" rx="2" fill="#fff" fill-opacity=".113"/>
<rect x="333" y="861" width="199" height="14.500" rx="2" fill="#fff" fill-opacity=".113"/>
<g font-family="Liberation Mono, Noto Sans CJK SC, monospace" font-size="11.700" fill="#353535">
<text x="334" y="833" xml:space="preserve"><tspan letter-spacing="1.300">当前矩形模式</tspan>:  <tspan letter-spacing="1.300">宽度</tspan>=6279.4093</text>
<text x="334" y="853" xml:space="preserve">Specify block [Extents] First corner &lt;magenta rectang&gt;:</text>
<text x="334" y="873" xml:space="preserve"><tspan letter-spacing="1.300">当前矩形模式</tspan>:  <tspan letter-spacing="1.300">宽度</tspan>=6279.4093</text>
</g>
<!-- drawing -->
<g fill="none" stroke="#d8d8d8" stroke-width="1.300">
<path d="M462.300 432H690.200V681H462.300z" stroke-width="1.700"/>
<path d="M256.300 605.400l29.400 17.300v33.600l-29.400 17.200-29.100-17.200v-33.600z"/>
<path d="M342 656c-2-6-7-9.700-12-9.700-7.600 0-12 6.700-12 13.700 0 14 11 24.800 24 24.800s25-10.800 25-24.800c0-7-4.400-13.700-12-13.700-5 0-10 3.700-13 9.700z" stroke-width="1.200"/>
</g>
<path d="M571.400 556h10.200M576.500 550.800v10.400M572.800 552.400l7.400 7.400M580.200 552.400l-7.400 7.400" stroke="#fff" stroke-width="1.250"/>
<!-- crosshair -->
<path d="M614.500 139V889M49 601.500H1037" stroke="#e6e6e6" stroke-width="1.500"/>
<!-- magenta rect -->
<rect x="614.200" y="602.800" width="58.800" height="66.600" fill="none" stroke="#ff00ff" stroke-width="2"/>
<!-- highlighted hexagon -->
<filter id="gl" x="-20%" y="-20%" width="140%" height="140%"><feGaussianBlur stdDeviation="1.100"/></filter>
<path d="M643.400 602.200l28.800 16.300v34.500l-28.800 16-28.800-16v-34.500z" fill="none" stroke="#2344a0" stroke-width="4.200" stroke-linejoin="round" filter="url(#gl)"/>
<path d="M643.400 602.200l28.800 16.300v34.500l-28.800 16-28.800-16v-34.500z" fill="none" stroke="#fff" stroke-width="1.300" stroke-linejoin="round"/>
<!-- pickbox -->
<rect x="604.500" y="591.500" width="20.600" height="20" fill="none" stroke="#0a8a0a" stroke-width="2"/>
<path d="M625 610.700h8M629 606.700v8M668.600 669.500h10M673.600 664.500v10" stroke="#0a8a0a" stroke-width="1.300"/>
<!-- dyn input -->
<rect x="636" y="623" width="134" height="22.600" fill="#999"/>
<rect x="775" y="623" width="91" height="20" fill="#fff"/>
<rect x="778" y="625" width="80" height="16" fill="#0078d7"/>
<rect x="871" y="623" width="86" height="20" fill="#999"/>
<rect x="757" y="632" width="9" height="9" fill="#d8d8d8" stroke="#666" stroke-width=".8"/>
<path d="M759.500 634.500l2 2.500 2-2.500M761.500 633.500v3.500M759 638.800h5" stroke="#333" stroke-width=".9" fill="none"/>

</svg>
<div class="t" style="left:590px;top:486.500px;font-size:12px;color:#000;">指定另一个角点或</div>
<div class="t" style="left:729.500px;top:486px;font-size:12.500px;color:#fff;">-367866.6991</div>
<div class="t" style="left:824.500px;top:486px;font-size:12.500px;color:#000;">424775.8755</div>

</div>

<div id="rightbar" class="abs">
  <div class="abs" style="left:17px;top:0;width:47px;height:767px;background:#f3f3f3;"></div>
  <div class="abs" style="left:1px;top:274px;width:15px;height:17px;background:#cdcdcd;"></div>
  <div class="panel" style="left:21px;top:0;width:41px;height:693px;"></div>
  <svg style="left:0;top:0" width="64" height="767" viewBox="1037 139 64 767">
    <path d="M1042.400 150.200l3.300-3.600 3.300 3.600M1042.400 878.400l3.300 3.600 3.300-3.600" fill="none" stroke="#444" stroke-width="1.900"/>
    <path d="M1062 142h1v1h-1zM1064 142h1v1h-1zM1066 142h1v1h-1zM1068 142h1v1h-1zM1070 142h1v1h-1zM1072 142h1v1h-1zM1074 142h1v1h-1zM1062 144h1v1h-1zM1064 144h1v1h-1zM1066 144h1v1h-1zM1068 144h1v1h-1zM1070 144h1v1h-1zM1072 144h1v1h-1zM1074 144h1v1h-1z" fill="#666"/>
    <!-- erase -->
    <clipPath id="ec"><rect x="1060" y="147" width="33.900" height="40"/></clipPath>
    <g clip-path="url(#ec)"><g transform="translate(1073.350 176.500) rotate(-43.800)">
      <path d="M0-4.200A5.200 4.200 0 0 0 0 4.200z" fill="#f53434"/>
      <rect x="0" y="-4.100" width="5.700" height="8.200" fill="#fff"/>
      <rect x="5.700" y="-4.100" width="32" height="8.200" fill="#fcc85c" stroke="#e9b24c" stroke-width=".700"/>
    </g></g>
    <path d="M1062 182.400h6" stroke="#555" stroke-width="1.300"/>
    <path d="M1078 182.400h16" stroke="#1b82e0" stroke-width="1.300"/>
    <!-- copy -->
    <circle cx="1069.400" cy="196.400" r="7" fill="none" stroke="#555" stroke-width="1.300"/>
    <path d="M1078.200 191.800h8.600v6" fill="none" stroke="#333" stroke-width="1.300"/>
    <path d="M1083.600 197.400h6.400l-3.200 5.200z" fill="#333"/>
    <circle cx="1076.400" cy="213.400" r="7" fill="none" stroke="#1b82e0" stroke-width="1.300"/>
    <path d="M1083.700 206.900A7 7 0 1 1 1083.700 219.900" fill="none" stroke="#1b82e0" stroke-width="1.300"/>
    <!-- mirror -->
    <path d="M1076.500 229v28.300h-13.400z" fill="none" stroke="#555" stroke-width="1.200"/>
    <path d="M1078.700 229v28.300h13.400z" fill="none" stroke="#1b82e0" stroke-width="1.200"/>
    <!-- offset -->
    <path d="M1093.600 269.800h-20.200a11.250 11.250 0 0 0 0 22.500h20.200" fill="none" stroke="#1b82e0" stroke-width="1.200"/>
    <path d="M1093.600 275h-19.600a6 6 0 0 0 0 12h19.600" fill="none" stroke="#555" stroke-width="1.200"/>
    <!-- array -->
    <rect x="1064.600" y="306.200" width="11" height="10.200" fill="none" stroke="#555" stroke-width="1.200"/>
    <rect x="1080.600" y="306.200" width="11" height="10.200" fill="none" stroke="#1b82e0" stroke-width="1.200"/>
    <rect x="1064.600" y="322" width="11" height="10.400" fill="none" stroke="#1b82e0" stroke-width="1.200"/>
    <rect x="1080.600" y="322" width="11" height="10.400" fill="none" stroke="#1b82e0" stroke-width="1.200"/>
    <path d="M1093.800 331.600v3.600h-3.600z" fill="#333"/>
    <!-- move -->
    <path d="M1078 341.200l5 6.200h-3.600v8h8.200v-3.600l6.200 5-6.200 5v-3.600h-8.200v8h3.600l-5 6.200-5-6.200h3.600v-8h-8.200v3.600l-6.200-5 6.200-5v3.600h8.200v-8h-3.600z" fill="#333"/>
    <!-- rotate -->
    <path d="M1079 382.050A13.600 13.600 0 1 0 1091.500 394" fill="none" stroke="#333" stroke-width="1.300"/>
    <path d="M1078.200 379.200l5.800 3.200-5.800 3.200z" fill="#333"/>
    <!-- scale -->
    <path d="M1062.600 429.600v-12.200h30.800v30.800h-12" fill="none" stroke="#1b82e0" stroke-width="1.200"/>
    <rect x="1062.600" y="431.600" width="17" height="16.600" fill="none" stroke="#555" stroke-width="1.200"/>
    <!-- stretch -->
    <rect x="1062.600" y="456" width="14.400" height="30.200" fill="none" stroke="#555" stroke-width="1.200"/>
    <path d="M1078.400 455.600h5.400l9.600 30.600h-15" fill="none" stroke="#1b82e0" stroke-width="1.200"/>
    <path d="M1071 479.600h9" stroke="#333" stroke-width="1.200"/>
    <path d="M1079.200 476.400l5.800 3.200-5.800 3.200z" fill="#333"/>
    <!-- trim -->
    <path d="M1062 495.400h16" stroke="#1b82e0" stroke-width="1.300" stroke-dasharray="4.100 2"/>
    <path d="M1086 495.400h8" stroke="#555" stroke-width="1.300"/>
    <path d="M1080.200 493.200l3.600 3.300.2 14.800-3.800 1.800zM1070 499l10.400 10.100-1.300 4-9.100-8.300z" fill="#333"/>
    <path d="M1079 512.600l5 -1.300 1.200 3.200-5.600 1.200z" fill="#333"/>
    <circle cx="1081.300" cy="512.400" r="1.200" fill="#f5f5f5"/>
    <ellipse cx="1080" cy="519.600" rx="3.200" ry="4.700" transform="rotate(8 1080 519.600)" fill="none" stroke="#333" stroke-width="1.900"/>
    <ellipse cx="1087.800" cy="516.700" rx="3.900" ry="2.900" transform="rotate(32 1087.800 516.700)" fill="none" stroke="#333" stroke-width="1.900"/>
    <!-- extend -->
    <path d="M1092.400 535.400v23.200M1062 551.400h9" stroke="#555" stroke-width="1.200"/>
    <path d="M1072.400 551.400h18.600" stroke="#1b82e0" stroke-width="1.200" stroke-dasharray="3.200 1.600"/>
    <path d="M1071 544.500h15" stroke="#333" stroke-width="1.200"/>
    <path d="M1085.200 541l6.200 3.500-6.200 3.500z" fill="#333"/>
    <!-- break at point -->
    <path d="M1087 575.500h5.500v20h-29v-20h21" fill="none" stroke="#555" stroke-width="1.200"/>
    <path d="M1085.500 572.200v6.800" stroke="#1b82e0" stroke-width="1.300"/>
    <!-- break -->
    <path d="M1085 614.500h7.500v20h-29v-20h7.500" fill="none" stroke="#555" stroke-width="1.200"/>
    <path d="M1072.400 611.200v6.800M1083.500 611.200v6.800" stroke="#1b82e0" stroke-width="1.300"/>
    <!-- join -->
    <path d="M1062 660.500h31.600" stroke="#555" stroke-width="1.200"/>
    <path d="M1072.400 657.200l5.600 3.300-5.600 3.300zM1083.600 657.200l-5.600 3.300 5.600 3.300z" fill="#1b82e0"/>
    <!-- chamfer -->
    <path d="M1062.600 702.400v12.200M1081.400 683.600h12.200" stroke="#555" stroke-width="1.200"/>
    <path d="M1062.800 700.400l17.200-16" stroke="#1b82e0" stroke-width="1.200"/>
    <!-- fillet -->
    <path d="M1062.600 741v11.400M1082 721.600h11.600" stroke="#555" stroke-width="1.200"/>
    <path d="M1062.600 739.600c0-10 7-18 18-18" fill="none" stroke="#1b82e0" stroke-width="1.200"/>
    <!-- blend -->
    <path d="M1062.600 790.800c.2-5.600.6-10 1.600-14M1091.500 775.400c1-4.600 1.600-10 1.800-16.700" fill="none" stroke="#555" stroke-width="1.200"/>
    <path d="M1064.200 776.800c1-4.600 2.800-7.300 5.500-7.300 6 0 9.600 12.800 16.700 12.800 2.600 0 4.200-2.800 5.100-6.900" fill="none" stroke="#1b82e0" stroke-width="1.200"/>
    <!-- explode -->
    <rect x="1065.400" y="808.800" width="17.200" height="17.400" fill="none" stroke="#555" stroke-width="1.200"/>
    <path d="M1062.600 808v18.800M1066 805.400l5.800-6.400h17.700l-5.700 6.400zM1085 809.200l7.300-7.700V819l-7.300 7.200z" fill="none" stroke="#1b82e0" stroke-width="1.200"/>
  </svg>
</div>

<div id="hscroll" class="abs">
  <div class="abs" style="left:17px;top:1px;width:17px;height:15px;background:#cdcdcd;"></div>
  <svg style="left:0;top:0" width="988" height="17" viewBox="49 889 988 17">
    <path d="M59.600 894.200l-3.800 3.300 3.800 3.300M1026.800 894.200l3.800 3.300-3.800 3.300" fill="none" stroke="#444" stroke-width="1.900"/>
  </svg>
</div>
<div id="cmdline" class="abs" style="left:271px;top:879px;width:560px;height:27px;">
  <div class="abs" style="left:0;top:0;width:560px;height:10px;background:rgba(206,206,206,.82);border-radius:3px 3px 0 0;"></div>
  <div class="abs" style="left:0;top:10px;width:56px;height:17px;background:#dbdbdb;border-radius:0 0 0 3px;"></div>
  <div class="abs" style="left:0;top:0;width:56px;height:10px;background:rgba(120,120,120,.35);border-radius:3px 0 0 0;"></div>
  <div class="abs" style="left:56px;top:10px;width:504px;height:17px;background:#fdfdfd;"></div>
  <div class="t" style="left:87px;top:8px;font-family:'Liberation Mono',monospace;font-size:11.700px;color:#333;">Other corner:</div>
  <svg style="left:0;top:0" width="560" height="27" viewBox="271 879 560 27">
    <path d="M275 883h2v2h-2zM278 883h2v2h-2zM275 886h2v2h-2zM278 886h2v2h-2zM275 889h2v2h-2zM278 889h2v2h-2zM275 892h2v2h-2zM278 892h2v2h-2zM275 895h2v2h-2zM278 895h2v2h-2zM275 898h2v2h-2zM278 898h2v2h-2z" fill="#666"/>
    <path d="M286 887.200l8.200 8m0-8l-8.200 8" stroke="#777" stroke-width="1.700"/>
    <path transform="translate(-.4 -1)" d="M307 900.400l8.400-8.600c-.8-2.600.4-5 3.400-5.600l-1.600 2.800 1.600 1.800 3-.6c-.4 3-3 4.400-5.400 3.400l-8 8.400c-1 .6-2.200-.4-1.400-1.600z" fill="#f2f2f2" stroke="#666" stroke-width="1"/>
    <rect x="331.600" y="887.600" width="15" height="11.400" fill="#f8f8f8" stroke="#555" stroke-width="1.100"/>
    <rect x="331.600" y="887.600" width="15" height="2.200" fill="#555"/>
    <path d="M334 892.400l2.400 1.700-2.400 1.700M337.600 896.600h3.600" fill="none" stroke="#555" stroke-width="1"/>
    <path d="M349.800 891h6.400l-3.200 3.800z" fill="#666"/>
    <path d="M818.600 894.200h7l-3.500-3.800z" fill="#777"/>
  </svg>
</div>

<div id="bottom" class="abs">
  <div class="abs" style="left:0;top:29px;width:1101px;height:1px;background:#ececec;"></div>
  <div class="abs" style="left:0;top:0;width:1101px;height:1px;background:#c6c6c6;"></div>
  <svg style="left:0;top:0" width="220" height="30" viewBox="0 906 220 30">
    <path d="M64 906.600c4 0 5 3 6 8.500s2 8.500 6 8.500h32c4 0 5-3 6-8.500s2-8.500 6-8.500z" fill="#e6e6e6"/>
    <path d="M116 906.600c4 0 5 3 6 8.500s2 8.500 6 8.500h34c4 0 5-3 6-8.500s2-8.500 6-8.500z" fill="#e6e6e6"/>
    <path d="M175 922.600c4 0 5-2.600 6-8s2-8 6-8h9c2.600 0 2 2.600 1 8s-2.600 8-6.600 8z" fill="#e6e6e6"/>
    <path d="M12 906.600c4 0 5 3 6 8.500s2 8.500 6 8.500h32c4 0 5-3 6-8.500s2-8.500 6-8.500z" fill="#f1f1f1"/>
    <path d="M182 914.600h8.400m-4.200-4.200v8.400" stroke="#666" stroke-width="1.700"/>
  </svg>
  <div class="t" style="left:27px;top:1.500px;font-size:12px;font-weight:bold;color:#333;">模型</div>
  <div class="t" style="left:74px;top:1.500px;font-size:12px;color:#666;">布局1</div>
  <div class="t" style="left:128px;top:1.500px;font-size:12px;color:#666;">布局2</div>
  <div class="sg" style="left:533px;width:93px;"></div>
  <div class="sg" style="left:629px;width:166px;"></div>
  <div class="sg" style="left:798px;width:105px;"></div>
  <div class="sg" style="left:906px;width:39px;"></div>
  <div class="sg" style="left:946px;width:24px;"></div>
  <div class="sg" style="left:973px;width:24px;"></div>
  <div class="sg" style="left:1000px;width:48px;"></div>
  <div class="sg" style="left:1052px;width:49px;"></div>
  <div class="on" style="left:564px;top:3px;"></div>
  <div class="on" style="left:733px;top:3px;"></div>
  <div class="on" style="left:757px;top:3px;"></div>
  <div class="on" style="left:799px;top:3px;"></div>
  <div class="t" style="left:536px;top:6px;font-size:12px;font-weight:500;color:#2a2a2a;">模型</div>
  <div class="t" style="left:874.500px;top:5.700px;font-size:12px;font-weight:bold;color:#444;transform:scaleX(.76);transform-origin:0 0;">1:1</div>
  <svg style="left:520px;top:0" width="581" height="30" viewBox="520 906 581 30">
    <defs>
      <path id="dd" d="M0 0h7l-3.500 4z" fill="#555"/>
      <path id="star" d="M0-8.200L2-1.600 1.800.2 5 2.600 7.200 7.600 2.800 6.200 0 3.200-2.800 6.200-7.200 7.600-5 2.600-1.800.2-2-1.600z" fill="#555"/>
    </defs>
    <!-- grid -->
    <path d="M570.500 912v16M575.500 912v16M580.500 912v16M567 915.500h17M567 920.500h17M567 925.500h17" stroke="#333" stroke-width="1.200"/>
    <!-- snap -->
    <path d="M593.2 914.2h1.6v1.6h-1.6zM598.4 914.2h1.6v1.6h-1.6zM603.6 914.2h1.6v1.6h-1.6zM593.2 918.2h1.6v1.6h-1.6zM598.4 918.2h1.6v1.6h-1.6zM603.6 918.2h1.6v1.6h-1.6zM593.2 922.2h1.6v1.6h-1.6zM598.4 922.2h1.6v1.6h-1.6zM603.6 922.2h1.6v1.6h-1.6zM593.2 926.2h1.6v1.6h-1.6zM598.4 926.2h1.6v1.6h-1.6zM603.6 926.2h1.6v1.6h-1.6z" fill="#555"/>
    <use href="#dd" x="615" y="917.900"/>
    <!-- ortho -->
    <path d="M634 912.200v15h15M634 922.600h4.600v4.600" fill="none" stroke="#555" stroke-width="1.150"/>
    <!-- polar -->
    <circle cx="664.400" cy="920.600" r="6.400" fill="none" stroke="#555" stroke-width="1.150"/>
    <path d="M664.400 920.600h8.800M664.400 920.600l7.800-8.200" stroke="#555" stroke-width="1.150"/>
    <use href="#dd" x="681" y="917.900"/>
    <!-- isodraft -->
    <path d="M703.800 912v16.600" stroke="#1ea84a" stroke-width="1.300"/>
    <path d="M697 912.800l13 13.600" stroke="#e02020" stroke-width="1.300"/>
    <circle cx="703.800" cy="920" r="1.400" fill="#f0f0f0" stroke="#333" stroke-width=".9"/>
    <use href="#dd" x="720" y="917.900"/>
    <!-- otrack -->
    <path d="M751.800 925.400h-14.600l10.600-10.600" fill="none" stroke="#333" stroke-width="1.150"/>
    <rect x="741" y="918.300" width="2.700" height="2.700" fill="#333"/>
    <!-- osnap -->
    <rect x="763" y="914.600" width="12.200" height="11.800" fill="none" stroke="#333" stroke-width="1.150"/>
    <rect x="760.600" y="912.600" width="4" height="4" fill="#e6f1fb" stroke="#333" stroke-width="1"/>
    <use href="#dd" x="784" y="917.900"/>
    <!-- anno -->
    <use href="#star" x="809.500" y="920.400"/>
    <circle cx="815.400" cy="916" r="2.300" fill="none" stroke="#444" stroke-width="1.100"/>
    <use href="#star" x="833.400" y="920.400"/>
    <path d="M840.800 911.600l-3.400 3.600h2.600l-2.800 3.800" fill="none" stroke="#555" stroke-width="1.300"/>
    <use href="#star" x="858" y="920.400"/>
    <use href="#dd" x="892.600" y="917.900"/>
    <!-- gear -->
    <g transform="translate(917.300 919.800)">
      <path d="M-1.700-8h3.400l.5 2.100 1.700.7 1.900-1.100 2.400 2.400-1.100 1.900.7 1.700 2.100.5v3.400l-2.100.5-.7 1.700 1.100 1.900-2.400 2.400-1.900-1.100-1.700.7-.5 2.100h-3.400l-.5-2.100-1.700-.7-1.900 1.100-2.400-2.400 1.100-1.900-.7-1.700-2.100-.5v-3.400l2.100-.5.700-1.700-1.100-1.900 2.400-2.400 1.900 1.100 1.700-.7z" fill="#555" transform="translate(0 -1.400) scale(.74)"/>
      <circle cx="0" cy="0" r="2.400" fill="#f0f0f0"/>
    </g>
    <use href="#dd" x="934" y="917.900"/>
    <!-- plus -->
    <path d="M950 921h16.400M958.200 912.800v16.400" stroke="#333" stroke-width="1.700"/>
    <!-- shapes -->
    <rect x="977.400" y="912.800" width="5.800" height="5.800" fill="none" stroke="#555" stroke-width="1.100"/>
    <circle cx="989.600" cy="918.600" r="3.200" fill="none" stroke="#555" stroke-width="1.100"/>
    <path d="M983.800 922l3.400 5.600h-6.800z" fill="none" stroke="#555" stroke-width="1.100"/>
    <!-- isolate -->
    <path d="M1004.400 912.400h9l5 3.600v8l-4 2.600h-10z" fill="#2f5fae"/>
    <path d="M1013.400 912.400l5 3.600v8l-4 2.600v-10z" fill="#6f9bd8"/>
    <rect x="1004.400" y="921.200" width="7" height="6" fill="#f3b21a"/>
    <path d="M1004.400 916.600h9M1008.600 912.400v8.800" stroke="#fff" stroke-width=".9"/>
    <circle cx="1008.600" cy="916.600" r="1.100" fill="#fff"/>
    <path d="M1010.400 925l2.800 2.800 6-6" fill="none" stroke="#3fae49" stroke-width="2"/>
    <!-- hardware accel -->
    <rect x="1026.600" y="913.600" width="14.400" height="11" fill="#f6f6f6" stroke="#555" stroke-width="1.100"/>
    <path d="M1027 924c2-4 3.600-7.600 5.400-7.600s3.400 5.600 5.400 5.600c1.200 0 2-2.400 3-5" fill="none" stroke="#555" stroke-width="1"/>
    <circle cx="1032" cy="916" r="1" fill="#1b82e0"/><circle cx="1037.600" cy="921.600" r="1" fill="#1b82e0"/>
    <path d="M1038.600 919.600l4.600 8.400h-9.200z" fill="#e8762c"/>
    <path d="M1038.600 922.600v3" stroke="#fff" stroke-width="1"/>
    <!-- fullscreen -->
    <rect x="1056.600" y="914.400" width="15" height="11.400" fill="none" stroke="#555" stroke-width="1.100"/>
    <path d="M1066 918.600l3-2.400m-2.600-.2h2.800v2.600M1062.400 921.600l-3 2.400m2.600.2h-2.800v-2.600" fill="none" stroke="#555" stroke-width="1"/>
    <!-- menu -->
    <path d="M1080 914.600h16M1080 920.400h16M1080 926.200h16" stroke="#444" stroke-width="1.900"/>
  </svg>
</div>

</body>
</html>
